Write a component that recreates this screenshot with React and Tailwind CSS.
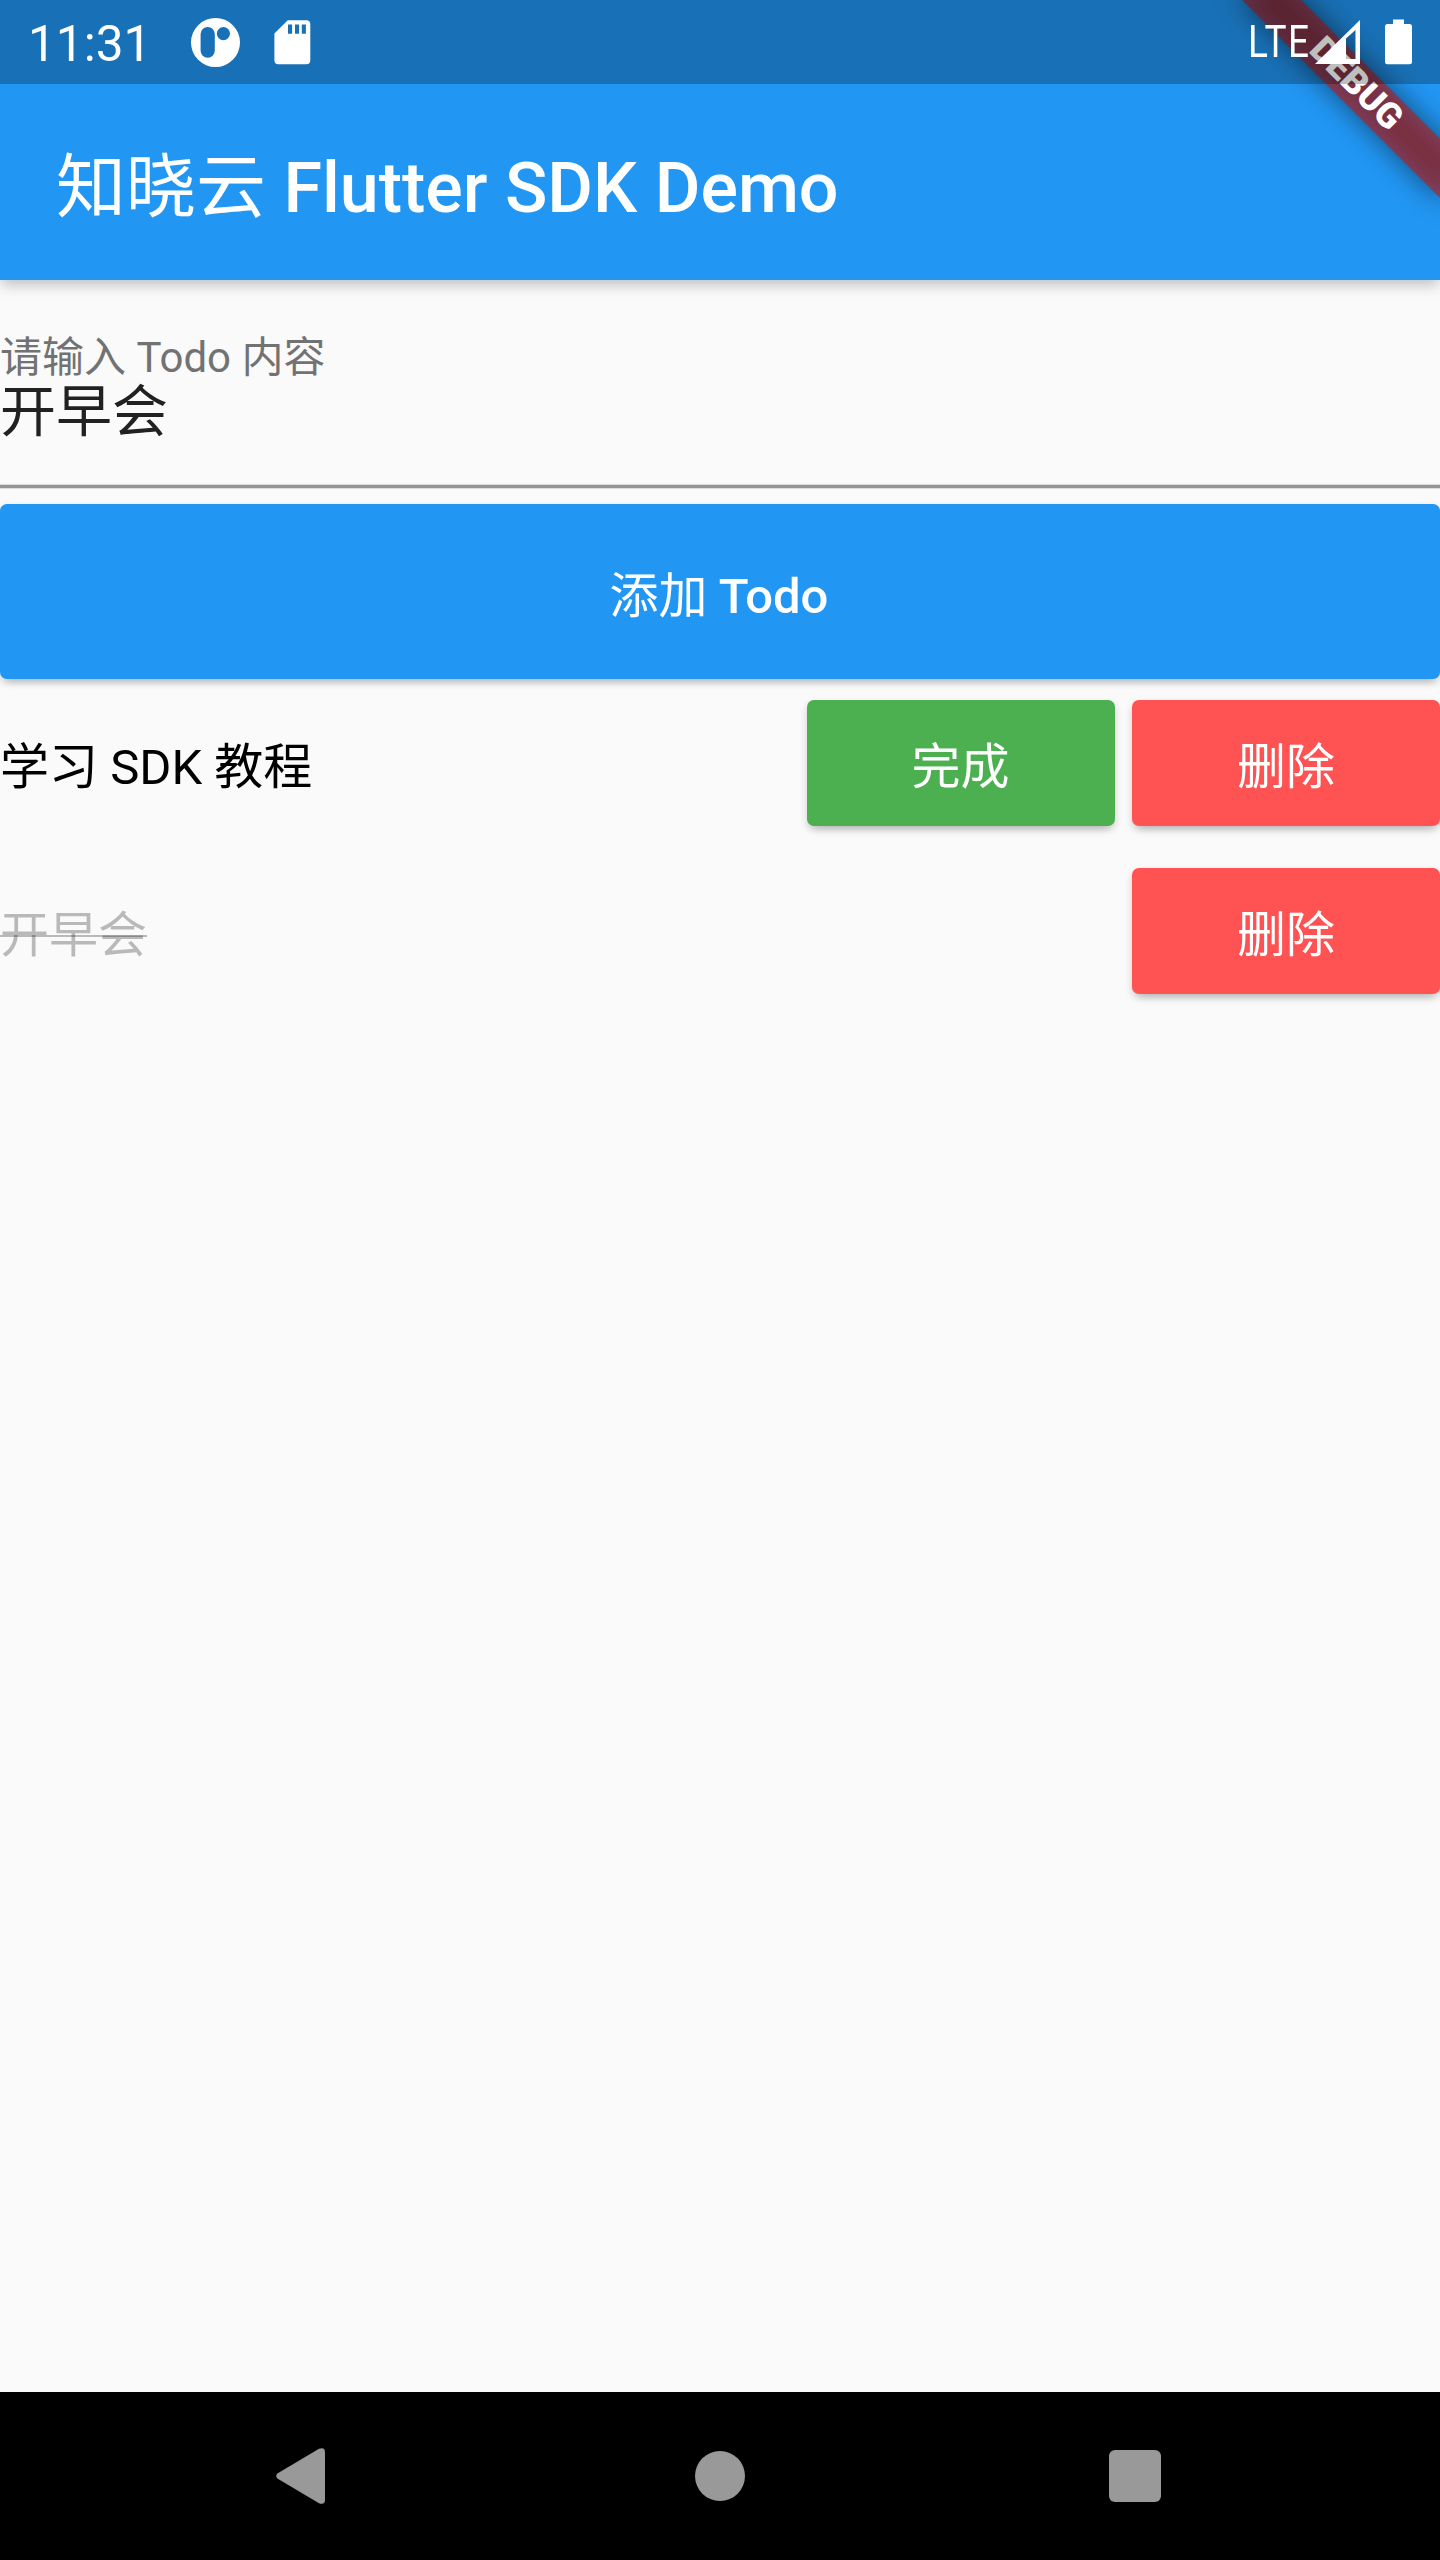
function StatusBar() {
  return (
    <div className="relative z-20 flex h-[84px] items-start justify-between bg-black/25 text-white">
      <div className="flex items-start">
        <span className="w-[161px] pl-[28px] pt-[15px] text-[49.5px] leading-[58px] whitespace-nowrap">11:31</span>
        <svg className="ml-[30px] mt-[18px]" width="49" height="49" viewBox="0 0 49 49" fill="#fff">
          <path
            fillRule="evenodd"
            d="M24.5 0a24.5 24.5 0 1 0 0 49a24.5 24.5 0 1 0 0-49z M16.7 9a7.1 7.1 0 0 1 7.1 7.1v16.6a7.1 7.1 0 0 1-14.2 0v-16.6a7.1 7.1 0 0 1 7.1-7.1z M32.4 9a6.6 6.6 0 1 1 0 13.2a6.6 6.6 0 1 1 0-13.2z"
          />
        </svg>
        <svg className="ml-[34px] mt-[20px]" width="37" height="45" viewBox="0 0 37 45" fill="#fff">
          <path
            fillRule="evenodd"
            d="M13.8 0.3H32.3a4 4 0 0 1 4 4V40.3a4 4 0 0 1-4 4H4.4a4 4 0 0 1-4-4V13.5z M14 4.5v9.2h4.1V4.5z M21 4.5v9.2h4.1V4.5z M27.8 4.5v9.2h4.1V4.5z"
          />
        </svg>
      </div>
      <div className="flex items-start">
        <span className="mt-[17px] w-[67px] origin-left scale-x-[0.85] text-[43.5px] leading-[51px] whitespace-nowrap tracking-[1.8px]">LTE</span>
        <svg className="mt-[20px]" width="45" height="44" viewBox="0 0 45 44" fill="#fff">
          <path fillRule="evenodd" d="M0 44L45 0V44z M31 18.5V39H40.5V10z" />
        </svg>
        <svg className="ml-[25px] mr-[28px] mt-[19px]" width="27" height="46" viewBox="0 0 27 46" fill="#fff">
          <path d="M8 0.5H19V5H24.5A2.5 2.5 0 0 1 27 7.500V42.800A2.500 2.500 0 0 1 24.500 45.300H2.500A2.500 2.500 0 0 1 0 42.800V7.500A2.500 2.500 0 0 1 2.500 5H8z" />
        </svg>
      </div>
    </div>
  );
}

function DebugBanner() {
  return (
    <div className="pointer-events-none absolute right-0 top-0 z-10 h-[280px] w-[320px] overflow-hidden">
      <div className="absolute left-[320px] top-0 origin-top-left rotate-45">
        <div className="absolute left-[-140px] top-[98px] h-[42px] w-[280px] bg-black/50 blur-[13.9px]" />
        <div className="absolute left-[-140px] top-[98px] flex h-[42px] w-[280px] items-center justify-center bg-[#b71c1c]/63 text-[35.7px] font-black leading-none text-white">
          DEBUG
        </div>
      </div>
    </div>
  );
}

function Button({ className, children }) {
  return (
    <button
      className={
        "flex items-center justify-center whitespace-pre rounded-[7px] text-[49px] font-medium leading-none text-white shadow-[0_10px_7px_-8px_rgba(0,0,0,0.14),0_5px_7px_0_rgba(0,0,0,0.08),0_3px_9px_0_rgba(0,0,0,0.1)] " +
        className
      }
    >
      {children}
    </button>
  );
}

function Cjk({ children }) {
  return <span className="font-normal">{children}</span>;
}

function TodoRow({ text, done }) {
  return (
    <div className="flex h-[168px] items-center gap-[17.5px]">
      <span
        className={
          done
            ? "relative mt-[8px] text-[49px] leading-[57px] text-black/26"
            : "mt-[8px] text-[49px] leading-[57px] text-black"
        }
      >
        {text}
        {done && <span className="absolute left-0 top-[28px] h-[2px] w-full bg-black/26" />}
      </span>
      <span className="flex-1" />
      {!done && (
        <Button className="h-[126px] w-[308px] bg-[#4caf50] pt-[9px]">
          <Cjk>完成</Cjk>
        </Button>
      )}
      <Button className="h-[126px] w-[308px] bg-[#ff5252] pt-[9px]">
        <Cjk>删除</Cjk>
      </Button>
    </div>
  );
}

export default function App() {
  return (
    <div className="relative flex h-[2560px] w-[1440px] flex-col overflow-hidden bg-[#fafafa] font-['Roboto','Noto_Sans_CJK_SC',sans-serif]">
      <header className="relative h-[280px] shrink-0 bg-[#2196f3] shadow-[0_6px_12px_-2px_rgba(0,0,0,0.15),0_6px_16px_0_rgba(0,0,0,0.1)]">
        <StatusBar />
        <div className="flex h-[196px] items-center pl-[56px] pt-[11px] text-[70px] font-medium leading-none text-white">
          <h1 className="whitespace-pre font-medium">
            <Cjk>知晓云</Cjk> Flutter SDK Demo
          </h1>
        </div>
        <DebugBanner />
      </header>

      <main className="flex flex-1 flex-col">
        <div className="flex h-[208px] flex-col border-b-[3px] border-[#969696] pt-[53px] shadow-[0_1px_0_#dcdcdc,inset_0_-1px_0_#dcdcdc]">
          <label className="text-[42px] leading-[49px] text-[#727272]">请输入 Todo 内容</label>
          <span className="text-[56px] leading-[60px] text-[#212121]">开早会</span>
        </div>
        <Button className="mt-[16px] h-[175px] w-full bg-[#2196f3] pr-[2px] pt-[10px]">
          <Cjk>添加</Cjk> Todo
        </Button>
        <TodoRow text="学习 SDK 教程" />
        <TodoRow text="开早会" done />
      </main>

      <nav className="flex h-[168px] shrink-0 items-center bg-black">
        <svg className="ml-[276px]" width="49" height="56" viewBox="0 0 49 56" fill="#999">
          <path d="M1.8 25.2L43 0.800Q49 -1.500 49 4.500V51.500Q49 57.500 43 55.200L1.800 30.800Q-1.500 28 1.800 25.200z" />
        </svg>
        <span className="ml-[370px] size-[50px] rounded-full bg-[#999]" />
        <span className="ml-[364px] size-[52px] rounded-[6px] bg-[#999]" />
      </nav>
    </div>
  );
}
